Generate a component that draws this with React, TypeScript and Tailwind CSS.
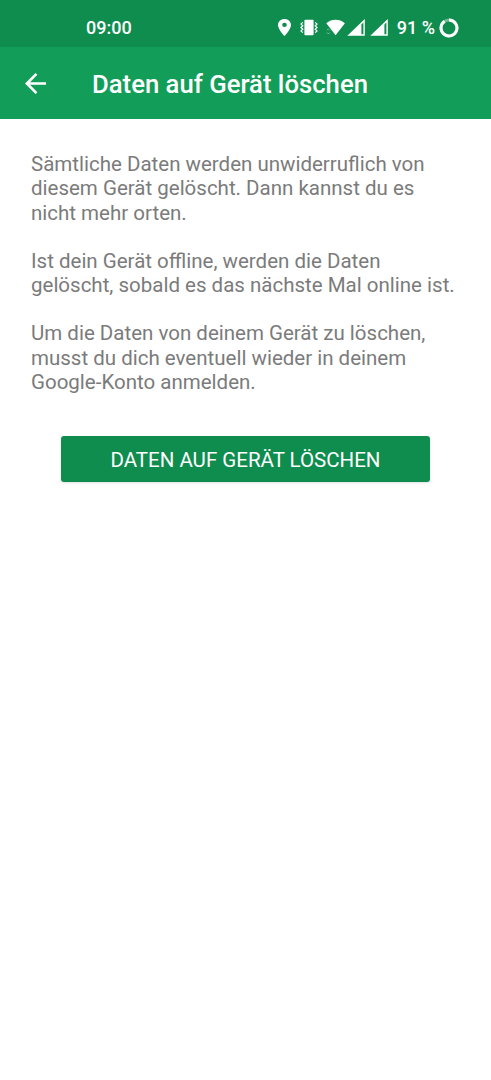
const paragraphs = [
  [
    "Sämtliche Daten werden unwiderruflich von",
    "diesem Gerät gelöscht. Dann kannst du es",
    "nicht mehr orten.",
  ],
  [
    "Ist dein Gerät offline, werden die Daten",
    "gelöscht, sobald es das nächste Mal online ist.",
  ],
  [
    "Um die Daten von deinem Gerät zu löschen,",
    "musst du dich eventuell wieder in deinem",
    "Google-Konto anmelden.",
  ],
];

function LocationIcon() {
  return (
    <svg width="13" height="17" viewBox="5 2 14 20" preserveAspectRatio="none" fill="#fff">
      <path d="M12 2C8.13 2 5 5.13 5 9c0 5.25 7 13 7 13s7-7.75 7-13c0-3.87-3.13-7-7-7zm0 9.5a2.5 2.5 0 1 1 0-5 2.5 2.5 0 0 1 0 5z" />
    </svg>
  );
}

function VibrateIcon() {
  return (
    <svg className="ml-[9px]" width="18" height="17" viewBox="0 0 18 17" fill="none">
      <rect x="4.4" y="0.8" width="9.2" height="15.4" rx="1" fill="#fff" />
      <path
        d="M2.8 3.4L1 5.1L2.8 6.8L1 8.5L2.8 10.2L1 11.9L2.8 13.6M15.2 3.4L17 5.1L15.2 6.8L17 8.5L15.2 10.2L17 11.9L15.2 13.6"
        stroke="#fff"
        strokeWidth="1.2"
      />
    </svg>
  );
}

function WifiIcon() {
  return (
    <svg className="ml-2" width="19" height="17" viewBox="0 0 19 17" fill="none">
      <path d="M0.3 4.2C5.5 -0.4 13.5 -0.4 18.9 4.2L9.6 16.2Z" fill="#fff" />
      <path
        d="M0.8 11.3L2.3 9.8L3.8 11.3M0.8 13.5L2.3 15L3.8 13.5"
        stroke="#fff"
        strokeOpacity="0.4"
      />
    </svg>
  );
}

function SignalIcon() {
  return (
    <svg width="18" height="17" viewBox="0 0 18 17" fill="none">
      <path
        fillRule="evenodd"
        d="M17.8 0V16.8H0.3ZM16.4 3.4L14.4 5.4V15.2H16.4Z"
        fill="#fff"
      />
    </svg>
  );
}

function BatteryIcon() {
  return (
    <svg className="ml-1" width="20" height="20" viewBox="0 0 20 20" fill="none" stroke="#fff" strokeWidth="3">
      <circle cx="10" cy="10" r="8" strokeOpacity="0.4" />
      <path d="M10 2A8 8 0 1 1 5.6 3.3" />
    </svg>
  );
}

function StatusBar() {
  return (
    <div className="h-[47px] bg-[#0f8d4e] flex items-center justify-between pt-2 pl-[86px] pr-8 text-white text-lg font-medium">
      <span>09:00</span>
      <div className="flex items-center">
        <LocationIcon />
        <VibrateIcon />
        <WifiIcon />
        <div className="flex gap-[5px] ml-0.5 mr-[9px]">
          <SignalIcon />
          <SignalIcon />
        </div>
        <span>91 %</span>
        <BatteryIcon />
      </div>
    </div>
  );
}

export default function App() {
  return (
    <div className="min-h-screen bg-white font-['Roboto',sans-serif]">
      <StatusBar />
      <header className="h-[72px] bg-[#129e59] flex items-center pl-[25px] text-white">
        <svg width="21" height="21" viewBox="4 4 16 16" fill="#fff">
          <path d="M20 11H7.83l5.59-5.59L12 4l-8 8 8 8 1.41-1.41L7.83 13H20v-2z" />
        </svg>
        <h1 className="ml-[46px] pt-0.5 text-[25.7px] font-medium">Daten auf Gerät löschen</h1>
      </header>
      <main className="pt-[33px] px-[31px]">
        <div className="flex flex-col gap-6 text-[20.5px] leading-[24.3px] text-[#7b7b7b]">
          {paragraphs.map((lines) => (
            <p key={lines[0]}>
              {lines.map((line) => (
                <span key={line} className="block whitespace-nowrap">
                  {line}
                </span>
              ))}
            </p>
          ))}
        </div>
        <button className="mt-[42px] mx-[30px] w-[369px] h-[46px] pt-0.5 rounded-[3px] bg-[#0f8d4e] text-white text-[20.5px] shadow-sm">
          DATEN AUF GERÄT LÖSCHEN
        </button>
      </main>
    </div>
  );
}
